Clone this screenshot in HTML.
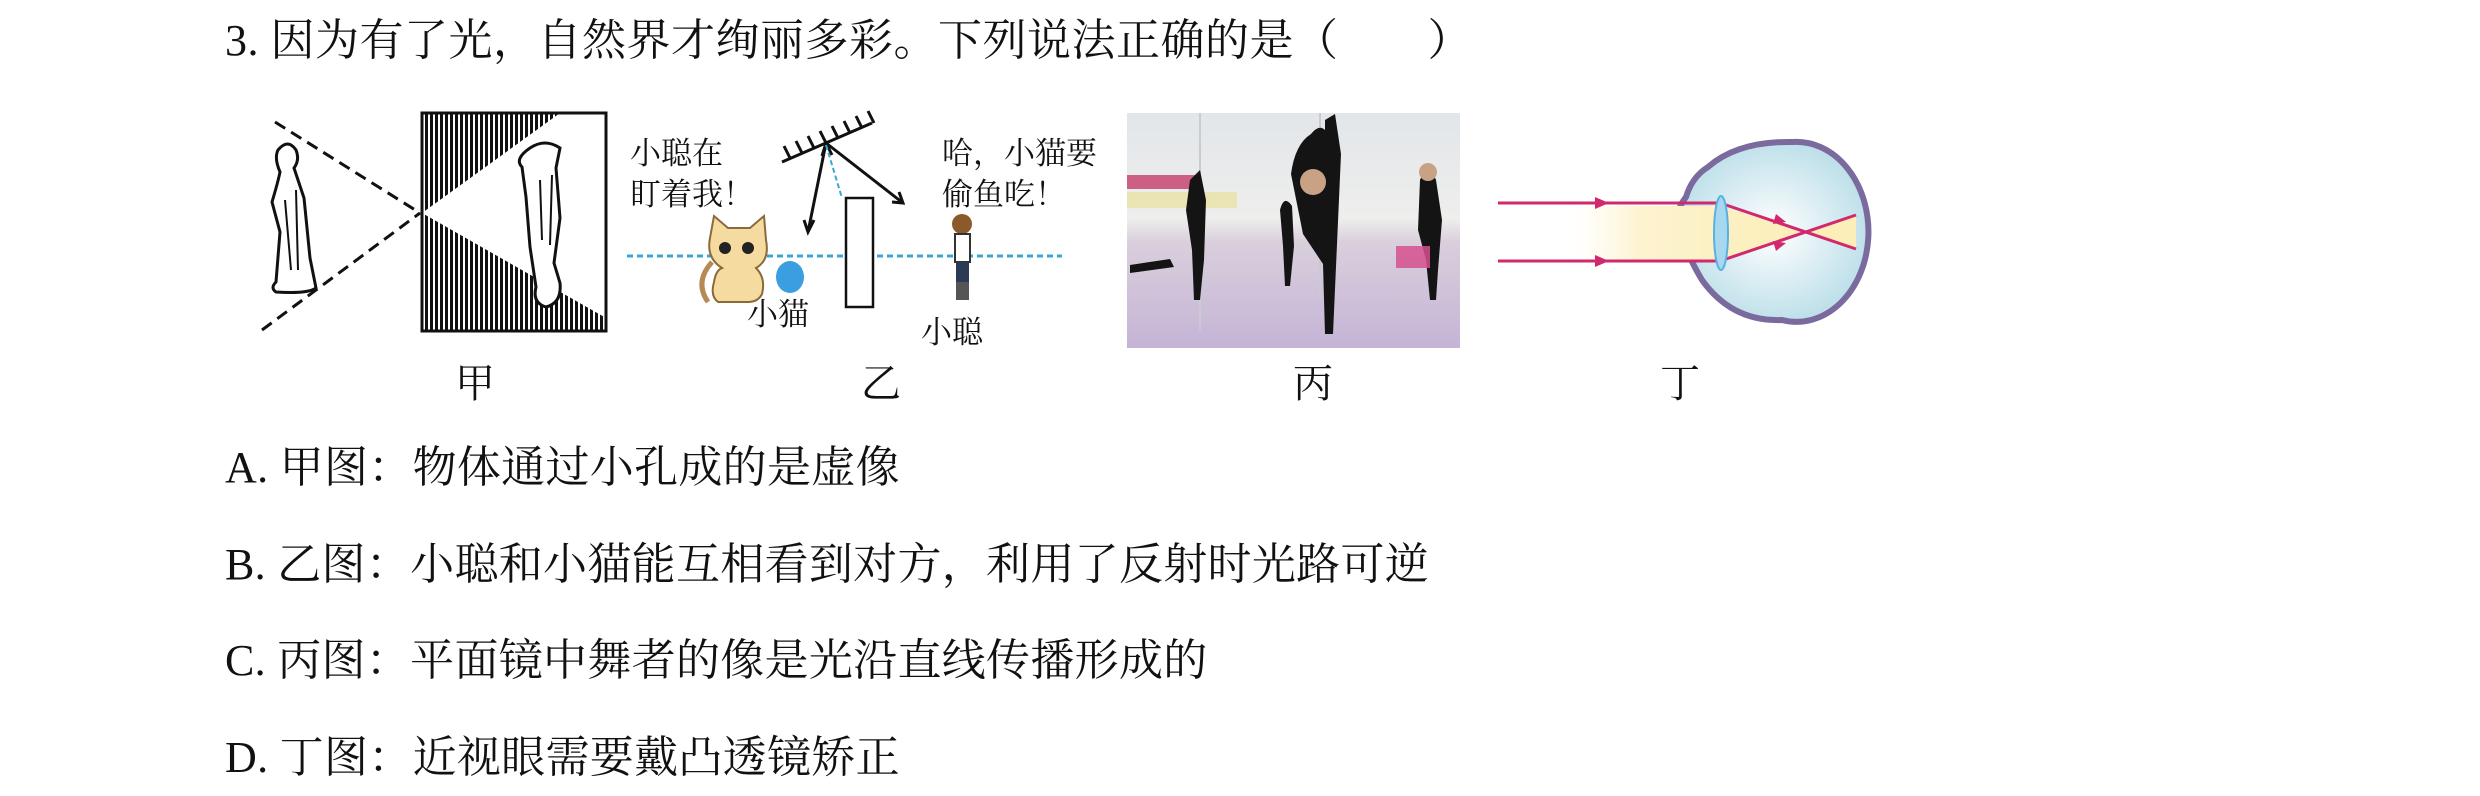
<!DOCTYPE html>
<html><head><meta charset="utf-8">
<style>
html,body{margin:0;padding:0;background:#fff;width:2480px;height:796px;overflow:hidden;position:relative}
.t{position:absolute;font-family:"Liberation Serif","Noto Serif CJK SC",serif;font-size:44px;line-height:44px;letter-spacing:0.3px;color:#111;white-space:pre}
.s{position:absolute;font-family:"Liberation Serif","Noto Serif CJK SC",serif;font-size:31px;line-height:34px;color:#111;white-space:pre}
</style></head><body>
<div class="t" style="left:225px;top:19px;letter-spacing:0.5px">3. 因为有了光，自然界才绚丽多彩。下列说法正确的是（　　）</div>

<svg style="position:absolute;left:0;top:0" width="2480" height="796">
<defs>
<pattern id="h" width="5" height="10" patternUnits="userSpaceOnUse"><rect width="5" height="10" fill="#fff"/><rect width="3" height="10" fill="#111"/></pattern>
<linearGradient id="room" x1="0" y1="0" x2="0" y2="1"><stop offset="0" stop-color="#e2e6ea"/><stop offset="0.45" stop-color="#eeeeec"/><stop offset="0.55" stop-color="#d9cfdc"/><stop offset="1" stop-color="#c5b4d6"/></linearGradient>
<radialGradient id="eye" cx="0.5" cy="0.5" r="0.5"><stop offset="0" stop-color="#ffffff"/><stop offset="1" stop-color="#bfe0ea"/></radialGradient>
<linearGradient id="band" x1="0" x2="1"><stop offset="0" stop-color="#fffbea" stop-opacity="0"/><stop offset="0.3" stop-color="#fdf3cf"/><stop offset="1" stop-color="#fbeeb8"/></linearGradient>
</defs>
<g stroke="#111" fill="none">
<line x1="275" y1="122" x2="420" y2="213" stroke-width="3" stroke-dasharray="12 7"/>
<line x1="262" y1="330" x2="420" y2="213" stroke-width="3" stroke-dasharray="12 7"/>
<polygon points="422,113 560,113 422,213" fill="url(#h)" stroke="none"/>
<polygon points="422,213 422,331 606,331 606,318" fill="url(#h)" stroke="none"/>
<rect x="422" y="113" width="184" height="218" stroke-width="3"/>
<path d="M278 150 q10 -12 18 0 q4 10 -2 18 l10 30 l6 60 l6 30 q-8 6 -40 4 q-6 -4 0 -10 l4 -50 l-8 -30 q6 -20 8 -30 q-6 -14 -2 -22 z" stroke-width="3"/>
<path d="M285 200 l6 70 M296 190 l2 80" stroke-width="2"/>
<path d="M530 148 q15 -10 30 0 l-4 20 l4 50 l-6 45 l6 20 q2 20 -14 24 q-14 -4 -10 -20 l-6 -40 l-4 -50 l-4 -30 q-8 -8 8 -19 z" stroke-width="3" fill="#fff"/>
<path d="M540 180 l2 60 M552 175 l-2 70" stroke-width="2"/>
</g>
<line x1="627" y1="256" x2="1062" y2="256" stroke="#3aa6d8" stroke-width="3" stroke-dasharray="6 4"/>
<g stroke="#111" fill="none" stroke-width="3">
<line x1="782" y1="162" x2="872" y2="123"/>
<path d="M790 158 l-6 -12 M802 153 l-6 -12 M814 148 l-6 -12 M826 143 l-6 -12 M838 138 l-6 -12 M850 133 l-6 -12 M862 128 l-6 -12 M874 123 l-6 -12"/>
<line x1="826" y1="143" x2="808" y2="232"/>
<path d="M822 156 l4 -13 l6 12 M804 220 l4 12 l6 -12"/>
<line x1="826" y1="143" x2="903" y2="203"/>
<path d="M892 202 l11 1 l-4 -11"/>
<rect x="846" y="198" width="27" height="109" fill="#fff" stroke-width="2.5"/>
</g>
<line x1="826" y1="145" x2="842" y2="198" stroke="#3aa6d8" stroke-width="2" stroke-dasharray="5 3"/>
<g>
<path d="M710 238 l4 -22 l14 12 h22 l14 -12 l2 24 q4 20 -10 28 q10 10 6 26 q-4 8 -14 8 h-30 q-8 -6 -4 -20 q2 -12 8 -14 q-16 -10 -12 -30 z" fill="#f6dba0" stroke="#8a6a3a" stroke-width="2"/>
<circle cx="725" cy="248" r="6" fill="#222"/><circle cx="748" cy="248" r="6" fill="#222"/>
<path d="M712 262 q-18 20 -4 40" stroke="#b58a55" stroke-width="5" fill="none"/>
<ellipse cx="790" cy="277" rx="14" ry="16" fill="#3a9ee0"/>
</g>
<g>
<circle cx="962" cy="224" r="10" fill="#8b5a2b"/>
<rect x="955" y="234" width="15" height="28" fill="#fff" stroke="#333" stroke-width="2"/>
<rect x="956" y="262" width="13" height="20" fill="#2b3a55"/>
<rect x="956" y="282" width="13" height="18" fill="#555"/>
</g>
<rect x="1127" y="113" width="333" height="235" fill="url(#room)"/>
<line x1="1200" y1="113" x2="1200" y2="330" stroke="#c8ccd0" stroke-width="2"/>
<line x1="1320" y1="113" x2="1320" y2="300" stroke="#c8ccd0" stroke-width="2"/>
<rect x="1127" y="175" width="70" height="14" fill="#c0245a" opacity="0.7"/>
<rect x="1127" y="192" width="110" height="16" fill="#e9e090" opacity="0.6"/>
<g fill="#141414">
<path d="M1325 120 l10 -6 l6 40 l-4 90 l-4 90 l-8 0 l-2 -70 l-20 -30 l-12 -60 q4 -30 20 -40 q8 -10 14 -4 z"/>
<circle cx="1313" cy="182" r="13" fill="#c9a285"/>
<path d="M1420 180 q8 -20 16 0 l6 40 l-4 50 l-2 30 h-6 l-4 -40 l-8 -30 z"/>
<circle cx="1428" cy="172" r="9" fill="#c9a285"/>
<path d="M1190 180 l10 -10 l6 30 l-2 60 l-4 40 h-6 l-2 -50 l-6 -40 z"/>
<path d="M1280 210 q4 -16 12 -4 l2 40 l-4 40 h-5 l-2 -40 z"/>
<path d="M1130 265 l40 -6 l4 8 l-44 6 z"/>
</g>
<rect x="1396" y="246" width="34" height="22" fill="#d6508e" opacity="0.85"/>
<path d="M1792 142 a72 90 0 1 1 -10 178 q-50 2 -80 -40 q-12 -20 -22 -45 q-8 -20 6 -38 q6 -20 22 -30 q30 -26 84 -25 z" fill="url(#eye)" stroke="#7b6a9e" stroke-width="6"/>
<polygon points="1569,206 1720,206 1806,232 1720,261 1569,261" fill="url(#band)"/>
<polygon points="1806,232 1856,214 1856,249" fill="#fbeeb8"/>
<g stroke="#d2286e" stroke-width="3" fill="none">
<polyline points="1498,203 1720,203 1856,249"/>
<polyline points="1498,261 1720,261 1856,215"/>
</g>
<g fill="#d2286e">
<path d="M1595 197 l14 6 l-14 6 z"/><path d="M1595 255 l14 6 l-14 6 z"/>
<path d="M1776 214 l10 8 l-13 2 z"/><path d="M1773 241 l13 2 l-10 8 z"/>
</g>
<ellipse cx="1721" cy="233" rx="7" ry="37" fill="#a8d8f0" stroke="#5ab0e0" stroke-width="2"/>
</svg>

<div class="s" style="left:630px;top:137px">小聪在</div>
<div class="s" style="left:630px;top:178px">盯着我！</div>
<div class="s" style="left:942px;top:137px">哈，小猫要</div>
<div class="s" style="left:942px;top:178px">偷鱼吃！</div>
<div class="s" style="left:747px;top:298px">小猫</div>
<div class="s" style="left:921px;top:316px">小聪</div>

<div class="t" style="left:455px;top:362px;font-size:40px">甲</div>
<div class="t" style="left:861px;top:362px;font-size:40px">乙</div>
<div class="t" style="left:1293px;top:362px;font-size:40px">丙</div>
<div class="t" style="left:1660px;top:362px;font-size:40px">丁</div>

<div class="t" style="left:225px;top:446px">A. 甲图：物体通过小孔成的是虚像</div>
<div class="t" style="left:225px;top:543px">B. 乙图：小聪和小猫能互相看到对方，利用了反射时光路可逆</div>
<div class="t" style="left:225px;top:639px">C. 丙图：平面镜中舞者的像是光沿直线传播形成的</div>
<div class="t" style="left:225px;top:736px">D. 丁图：近视眼需要戴凸透镜矫正</div>
</body></html>
